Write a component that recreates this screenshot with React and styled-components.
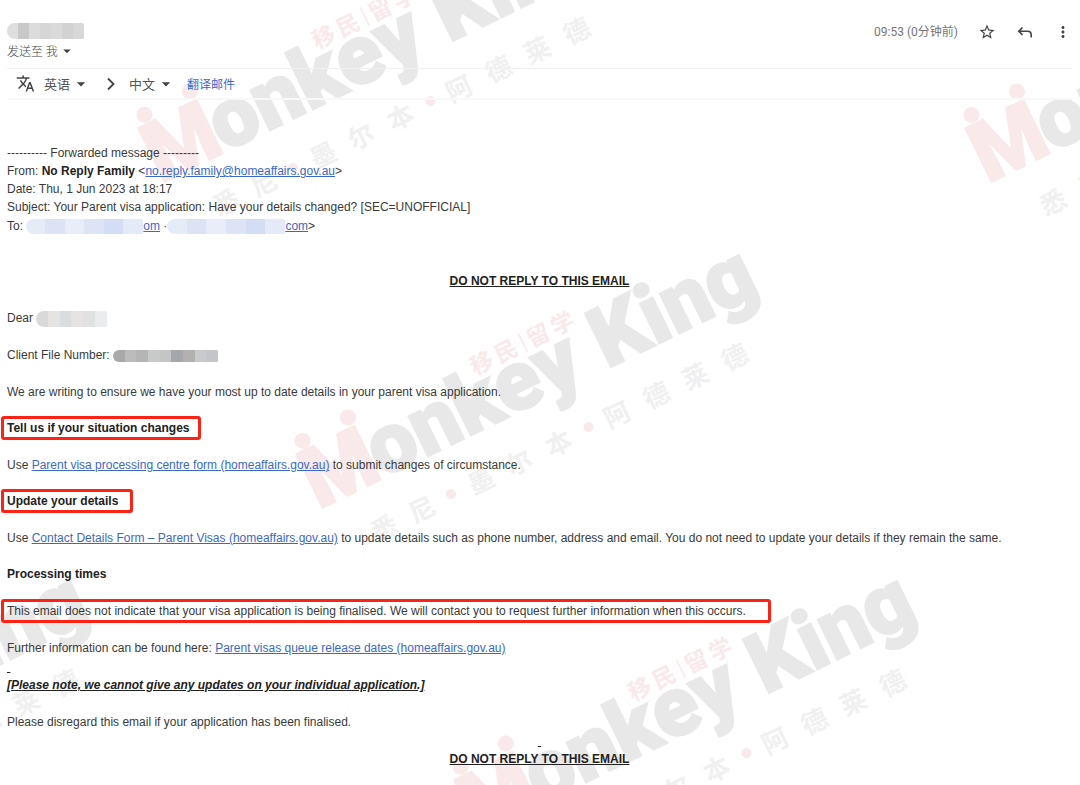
import styled, { createGlobalStyle } from "styled-components";
import {
  MdArrowDropDown,
  MdMoreVert,
  MdStarBorder,
  MdTranslate,
} from "react-icons/md";

const GlobalStyle = createGlobalStyle`
  * {
    box-sizing: border-box;
  }

  body {
    margin: 0;
    background-color: #fff;
    color: #3a3a3a;
    font-family: "Liberation Sans", "Noto Sans CJK SC", sans-serif;
    font-size: 12px;
    line-height: 18px;
  }
`;

const Page = styled.div`
  position: relative;
  min-height: 100vh;
  overflow: hidden;
`;

const WatermarkLayer = styled.svg`
  position: absolute;
  top: 0;
  left: 0;
  pointer-events: none;
`;

const Brand = styled.text`
  font-family: Roboto, sans-serif;
  font-weight: 900;
  font-size: 84px;
  fill: ${(props) => (props.$pink ? "#f9e9ea" : "#e8e8e8")};
  stroke: ${(props) => (props.$pink ? "#f9e9ea" : "#e8e8e8")};
  stroke-width: 2px;
`;

const Caption = styled.text`
  font-family: "Noto Sans CJK SC", sans-serif;
  font-weight: 700;
  font-size: ${(props) => props.$size}px;
  text-anchor: middle;
  fill: ${(props) => (props.$pink ? "#f9e9ea" : "#f0f0f0")};
`;

const Mail = styled.article`
  position: relative;
  padding: 0 8px 0 7px;
`;

const Header = styled.header`
  display: flex;
  justify-content: space-between;
  height: 69px;
  padding-top: 23px;
  border-bottom: 1px solid #f0f0f0;
`;

const Sender = styled.div`
  display: flex;
  flex-direction: column;
  align-items: flex-start;
  gap: 3px;
`;

const Actions = styled.div`
  display: flex;
  align-items: center;
  height: 18px;
  gap: 20px;
  color: #444;
`;

const Time = styled.time`
  font-family: Roboto, "Noto Sans CJK SC", sans-serif;
  font-size: 12px;
  color: #777;
`;

const IconButton = styled.button`
  display: flex;
  padding: 0;
  border: 0;
  background: none;
  color: inherit;
  cursor: pointer;
`;

const RecipientButton = styled(IconButton)`
  align-items: center;
  font-family: "Noto Sans CJK SC", sans-serif;
  font-weight: 300;
  font-size: 12px;
  line-height: 16px;
  color: #444;
`;

const TranslateBar = styled.div`
  display: flex;
  align-items: center;
  height: 31px;
  padding-left: 9px;
  border-bottom: 2px solid #f8f8f8;
  color: #444;
`;

const Language = styled.label`
  display: flex;
  align-items: center;
  margin-left: ${(props) => props.$gap}px;
`;

const LanguageSelect = styled.select`
  appearance: none;
  padding: 0;
  border: 0;
  background: none;
  font-family: "Noto Sans CJK SC", sans-serif;
  font-size: 13px;
  line-height: 18px;
  color: #555;
`;

const Arrow = styled.svg`
  margin-left: 16px;
`;

const TranslateLink = styled.a`
  margin-left: 11px;
  font-family: "Noto Sans CJK SC", sans-serif;
  font-size: 12px;
  color: #3c6ad0;
  text-decoration: none;
`;

const Body = styled.div`
  padding-top: 44px;
`;

const Row = styled.div`
  display: flex;
  align-items: center;
  height: ${(props) => (props.$tall ? 20 : 18)}px;
  white-space: pre;
`;

const Paragraph = styled.p`
  margin: 19px 0 0;
`;

const Heading = styled.h2`
  margin: 18px 0 0;
  font-size: 12px;
  line-height: 18px;
  color: #222;
`;

const Notice = styled(Paragraph)`
  margin-top: ${(props) => props.$space}px;
  text-align: center;
  font-weight: 700;
  color: #222;
  text-decoration: underline;
`;

const Remark = styled(Paragraph)`
  margin-top: 1px;
  font-weight: 700;
  font-style: italic;
  color: #222;
  text-decoration: underline;
`;

const SenderName = styled.strong`
  color: #222;
`;

const Link = styled.a`
  color: #3c68c8;
  text-decoration: underline;
`;

const Frame = styled.span`
  display: inline-block;
  margin: -3px -6px;
  padding: 0 ${(props) => props.$end}px 0 3px;
  border: 3px solid #fb2216;
  border-radius: 3px;
`;

const stops = (colors) =>
  colors
    .map((c, i) => {
      const step = 100 / colors.length;
      return `${c} ${i * step}% ${(i + 1) * step}%`;
    })
    .join(", ");

const Redaction = styled.span`
  display: inline-block;
  flex: none;
  vertical-align: middle;
  width: ${(props) => props.$width}px;
  height: ${(props) => props.$height}px;
  border-radius: 8px 2px 2px 8px;
  background: linear-gradient(to right, ${(props) => stops(props.$colors)});
`;

const greys = ["#dedede", "#c8c8c8", "#dcdcdc", "#d6d6d6", "#dadada", "#d2d2d2", "#d8d8d8"];
const nameTones = ["#d9d9d9", "#e6e4e2", "#dadcde", "#e6e4e2", "#e0e2e2", "#eaecee"];
const fileTones = ["#a9a9a9", "#bcbcbc", "#b5b5b5", "#c8c9c9", "#c4c5c5", "#a6a7aa", "#b3b1af", "#c9cacc", "#c3c5c8"];
const blues = ["#e6ebf8", "#dbe3f5", "#e8edf9", "#dce4f6", "#d3ddf3", "#e4eaf8"];

const tiles = [
  [164, 182],
  [991, 182],
  [322, 508],
  [-347, 834],
  [480, 834],
];

const city = [
  ["悉", 47],
  ["尼", 89],
  ["墨", 155],
  ["尔", 197],
  ["本", 241],
  ["阿", 306],
  ["德", 350],
  ["莱", 393],
  ["德", 437],
];

const service = [
  ["移", 207],
  ["民", 234],
  ["留", 270],
  ["学", 297],
];

function Watermark() {
  return (
    <WatermarkLayer width="100%" height="100%" aria-hidden="true">
      {tiles.map(([x, y]) => (
        <g key={`${x},${y}`} transform={`translate(${x} ${y}) rotate(-26)`}>
          <circle cx="12" cy="-69" r="8" fill="#f9e9ea" />
          <circle cx="63" cy="-70" r="8" fill="#f9e9ea" />
          <Brand $pink x="-4" y="0">
            M
          </Brand>
          <Brand x="67" y="0">
            onkey
          </Brand>
          <Brand x="317" y="0">
            King
          </Brand>
          {service.map(([char, cx]) => (
            <Caption key={cx} $size={23} $pink x={cx} y="-52">
              {char}
            </Caption>
          ))}
          <path d="M253 -71V-50" stroke="#f9e9ea" strokeWidth="1.5" />
          {city.map(([char, cx]) => (
            <Caption key={cx} $size={26} x={cx} y="55">
              {char}
            </Caption>
          ))}
          <circle cx="122" cy="44" r="5" fill="#f9e9ea" />
          <circle cx="275" cy="44" r="5" fill="#f9e9ea" />
        </g>
      ))}
    </WatermarkLayer>
  );
}

function ReplyIcon() {
  return (
    <svg width="18" height="18" viewBox="0 0 18 18" fill="none" stroke="currentColor" strokeWidth="1.6">
      <path d="M6.5 4.5L2.8 8.2L6.5 11.9M2.8 8.2H11.5Q15.2 8.2 15.2 11.8V14.4" />
    </svg>
  );
}

function LanguagePicker({ label, value, gap }) {
  return (
    <Language $gap={gap}>
      <LanguageSelect aria-label={label} defaultValue={value}>
        <option>{value}</option>
      </LanguageSelect>
      <MdArrowDropDown size={20} />
    </Language>
  );
}

export default function App() {
  return (
    <Page>
      <GlobalStyle />
      <Watermark />
      <Mail>
        <Header>
          <Sender>
            <Redaction $width={77} $height={16} $colors={greys} />
            <RecipientButton type="button">
              发送至 我
              <MdArrowDropDown size={18} />
            </RecipientButton>
          </Sender>
          <Actions>
            <Time>09:53 (0分钟前)</Time>
            <IconButton type="button" aria-label="Star">
              <MdStarBorder size={18} />
            </IconButton>
            <IconButton type="button" aria-label="Reply">
              <ReplyIcon />
            </IconButton>
            <IconButton type="button" aria-label="More">
              <MdMoreVert size={18} />
            </IconButton>
          </Actions>
        </Header>

        <TranslateBar>
          <MdTranslate size={19} />
          <LanguagePicker label="From" value="英语" gap={9} />
          <Arrow width="8" height="14" viewBox="0 0 8 14" fill="none" stroke="#444" strokeWidth="1.8">
            <path d="M1 1.5L6.5 7L1 12.5" />
          </Arrow>
          <LanguagePicker label="To" value="中文" gap={14} />
          <TranslateLink href="#translate">翻译邮件</TranslateLink>
        </TranslateBar>

        <Body>
          <Row>---------- Forwarded message ---------</Row>
          <Row>
            From: <SenderName>No Reply Family</SenderName> &lt;
            <Link href="mailto:no.reply.family@homeaffairs.gov.au">
              no.reply.family@homeaffairs.gov.au
            </Link>
            &gt;
          </Row>
          <Row>Date: Thu, 1 Jun 2023 at 18:17</Row>
          <Row>
            Subject: Your Parent visa application: Have your details changed?
            [SEC=UNOFFICIAL]
          </Row>
          <Row $tall>
            To:{" "}
            <Redaction $width={117} $height={15} $colors={blues} />
            <Link href="#first">om</Link> ·
            <Redaction $width={118} $height={15} $colors={blues} />
            <Link href="#second">com</Link>&gt;
          </Row>

          <Notice $space={36}>DO NOT REPLY TO THIS EMAIL</Notice>
          <Paragraph>
            Dear <Redaction $width={71} $height={16} $colors={nameTones} />
          </Paragraph>
          <Paragraph>
            Client File Number:{" "}
            <Redaction $width={105} $height={12} $colors={fileTones} />
          </Paragraph>
          <Paragraph>
            We are writing to ensure we have your most up to date details in
            your parent visa application.
          </Paragraph>
          <Heading>
            <Frame $end={9}>Tell us if your situation changes</Frame>
          </Heading>
          <Paragraph>
            Use{" "}
            <Link href="#form">
              Parent visa processing centre form (homeaffairs.gov.au)
            </Link>{" "}
            to submit changes of circumstance.
          </Paragraph>
          <Heading>
            <Frame $end={12}>Update your details</Frame>
          </Heading>
          <Paragraph>
            Use{" "}
            <Link href="#contact">
              Contact Details Form – Parent Visas (homeaffairs.gov.au)
            </Link>{" "}
            to update details such as phone number, address and email. You do
            not need to update your details if they remain the same.
          </Paragraph>
          <Heading>Processing times</Heading>
          <Paragraph>
            <Frame $end={22}>
              This email does not indicate that your visa application is being
              finalised. We will contact you to request further information
              when this occurs.
            </Frame>
          </Paragraph>
          <Paragraph>
            Further information can be found here:{" "}
            <Link href="#queue">
              Parent visas queue release dates (homeaffairs.gov.au)
            </Link>
          </Paragraph>
          <Remark>
            &nbsp;
            <br />
            [Please note, we cannot give any updates on your individual
            application.]
          </Remark>
          <Paragraph>
            Please disregard this email if your application has been finalised.
          </Paragraph>
          <Notice $space={1}>
            &nbsp;
            <br />
            DO NOT REPLY TO THIS EMAIL
          </Notice>
        </Body>
      </Mail>
    </Page>
  );
}
